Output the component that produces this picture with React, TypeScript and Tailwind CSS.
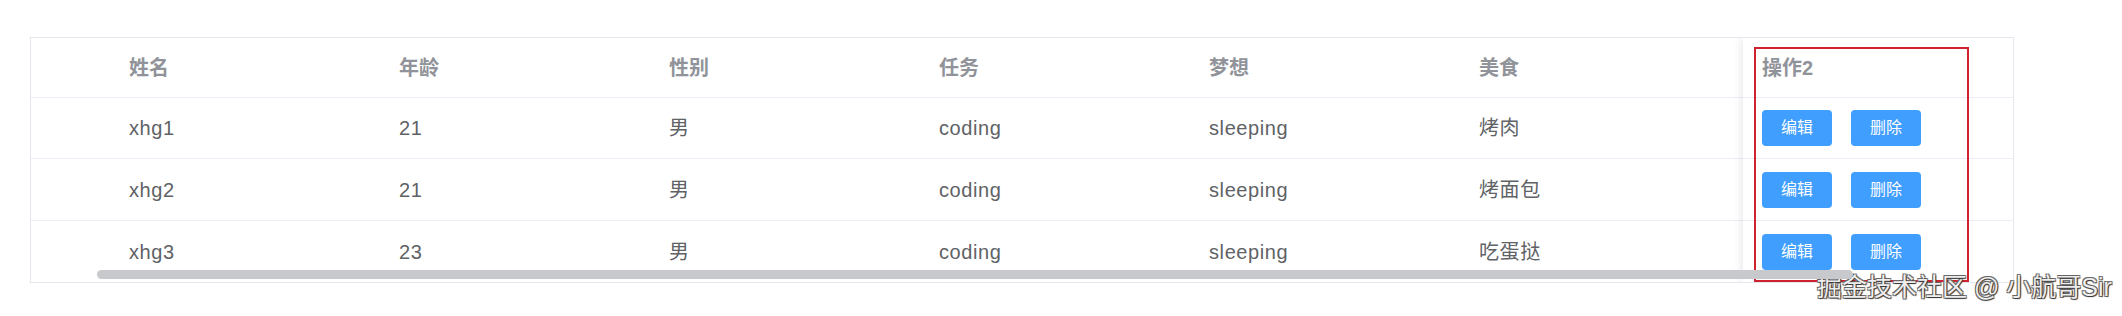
const HEADERS = ["姓名", "年龄", "性别", "任务", "梦想", "美食"];

const ROWS = [
  ["xhg1", "21", "男", "coding", "sleeping", "烤肉"],
  ["xhg2", "21", "男", "coding", "sleeping", "烤面包"],
  ["xhg3", "23", "男", "coding", "sleeping", "吃蛋挞"],
];

// row heights incl. bottom line: header, row1, row2, row3
const ROW_CLS = [
  "h-[61px] border-b border-[#ebeef5]",
  "h-[62px] border-b border-[#ebeef5]",
  "h-[61px]",
];

function ActionButton({ label }: { label: string }) {
  return (
    <button className="flex h-[36px] w-[70px] items-center justify-center rounded-[4px] bg-[#409eff] text-[16px] text-white">
      {label}
    </button>
  );
}

export default function App() {
  return (
    <div className="min-h-[316px] bg-white pl-[30px] pt-[37px] font-['Liberation_Sans','Noto_Sans_CJK_SC',sans-serif]">
      <div className="relative w-[2090px]">
        <div className="relative w-[1984px] overflow-hidden border border-[#e4e7ed]">
          {/* scrolled body */}
          <div className="flex h-[60px] items-center border-b border-[#ebeef5] text-[20px] font-bold text-[#909399]">
            <div className="w-[84px] shrink-0" />
            {HEADERS.map((h) => (
              <div key={h} className="w-[270px] shrink-0 pl-[14px]">
                {h}
              </div>
            ))}
            <div className="w-[270px] shrink-0" />
          </div>
          {ROWS.map((row, i) => (
            <div
              key={i}
              className={`flex items-center text-[20px] tracking-[0.6px] text-[#606266] ${ROW_CLS[i]}`}
            >
              <div className="w-[84px] shrink-0" />
              {row.map((cell, j) => (
                <div key={j} className="w-[270px] shrink-0 pl-[14px]">
                  {cell}
                </div>
              ))}
              <div className="w-[270px] shrink-0" />
            </div>
          ))}

          {/* fixed right column */}
          <div className="absolute right-0 top-0 w-[270px] bg-white shadow-[0_0_10px_rgba(0,0,0,0.12)]">
            <div className="flex h-[60px] items-center border-b border-[#ebeef5] pl-[19px] text-[20px] font-bold text-[#909399]">
              操作2
            </div>
            {ROWS.map((_, i) => (
              <div key={i} className={`flex items-center gap-[19px] pl-[19px] ${ROW_CLS[i]}`}>
                <ActionButton label="编辑" />
                <ActionButton label="删除" />
              </div>
            ))}
          </div>

          {/* horizontal scrollbar thumb */}
          <div className="absolute left-[66px] top-[232px] z-10 h-[9px] w-[1756px] rounded-full bg-[#c8c9cc]" />
        </div>

        {/* highlight box */}
        <div className="pointer-events-none absolute left-[1724px] top-[10px] h-[235px] w-[215px] border-2 border-[#d0212f]" />

        {/* watermark */}
        <div className="absolute left-[1787px] top-[238px] whitespace-nowrap text-[25px] leading-none text-[#eeeeee] [text-shadow:1px_1px_1px_#333,-1px_-1px_0_#666,1px_-1px_0_#777,-1px_1px_0_#777]">
          掘金技术社区 @ 小航哥Sir
        </div>
      </div>
    </div>
  );
}
